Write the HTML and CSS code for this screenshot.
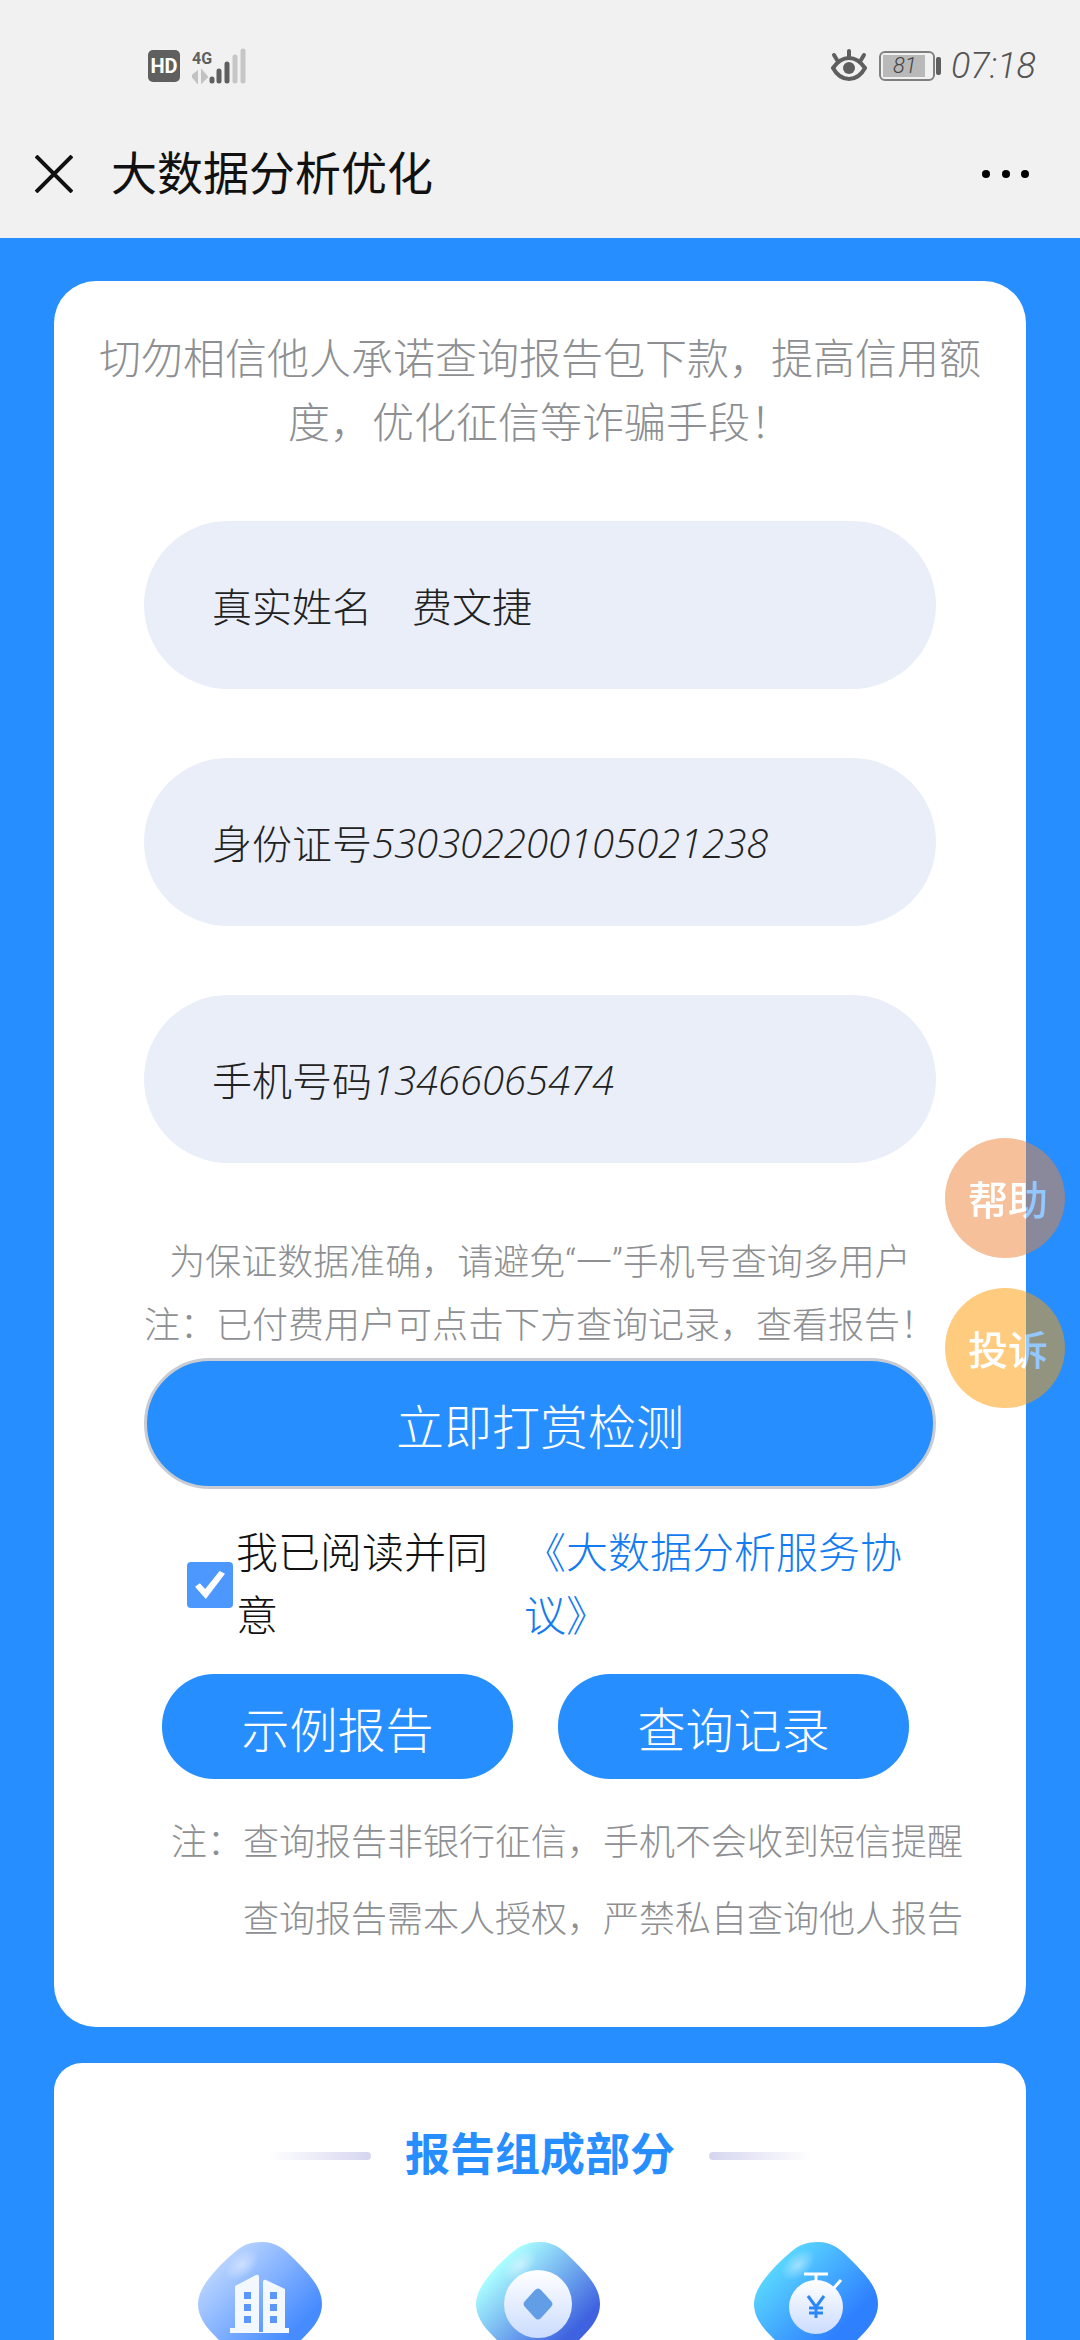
FILE: index.html
```html
<!DOCTYPE html>
<html lang="zh-CN">
<head>
<meta charset="utf-8">
<meta name="viewport" content="width=device-width, initial-scale=1">
<title>大数据分析优化</title>
<link rel="stylesheet" href="styles.css">
</head>
<body>
<header class="top">
  <div class="status">
    <div class="status-group">
      <span class="hd">HD</span>
      <svg class="signal" width="56" height="36" viewBox="0 0 56 36" aria-label="4G">
        <text x="0" y="16" class="signal-text">4G</text>
        <path d="M5 34V24L0 28ZM10 23V34L15 29Z" fill="#c2c2c2" stroke="#c2c2c2" stroke-width="2"/>
        <path d="M20 33V31M27 33V23M35 33V16" stroke="#5f5f5f" stroke-width="5" stroke-linecap="round"/>
        <path d="M43 33V9M51 33V3" stroke="#c6c6c6" stroke-width="5" stroke-linecap="round"/>
      </svg>
    </div>
    <div class="status-group">
      <svg width="36" height="34" viewBox="0 0 36 34" fill="none" stroke="#5f5f5f" stroke-linecap="round">
        <path d="M2 19Q9 9 18 9T34 19Q28 30 18 30T2 19Z" stroke-width="4"/>
        <path d="M18 2V8M3 6L6 11M33 6L30 11" stroke-width="4"/>
        <circle cx="18" cy="19" r="6" fill="#5f5f5f" stroke="none"/>
      </svg>
      <span class="battery"><span class="battery-level">81</span></span>
      <span class="clock">07:18</span>
    </div>
  </div>
  <nav class="titlebar">
    <button class="icon-button" type="button" aria-label="关闭">
      <svg width="38" height="38" viewBox="0 0 38 38"><path d="M1 1L37 37M37 1L1 37" stroke="#111" stroke-width="4"/></svg>
    </button>
    <h1 class="title">大数据分析优化</h1>
    <button class="icon-button" type="button" aria-label="更多">
      <svg width="48" height="8" viewBox="0 0 48 8"><circle cx="4" cy="4" r="4"/><circle cx="24" cy="4" r="4"/><circle cx="43" cy="4" r="4"/></svg>
    </button>
  </nav>
</header>

<main class="page">
  <section class="card">
    <p class="warning">切勿相信他人承诺查询报告包下款，提高信用额度，优化征信等诈骗手段！</p>
    <form class="form">
      <div class="field">
        <label for="name">真实姓名</label>
        <input id="name" type="text" value="　费文捷">
      </div>
      <div class="field">
        <label for="idno">身份证号</label>
        <input id="idno" class="digits" type="text" value="530302200105021238">
      </div>
      <div class="field">
        <label for="phone">手机号码</label>
        <input id="phone" class="digits" type="tel" value="13466065474">
      </div>
      <p class="hint">为保证数据准确，请避免“一”手机号查询多用户<br>注：已付费用户可点击下方查询记录，查看报告！</p>
      <button class="submit" type="button">立即打赏检测</button>
      <div class="agree">
        <input id="agree" class="check" type="checkbox" checked>
        <label for="agree">我已阅读并同意</label>
        <a href="#terms">《大数据分析服务协议》</a>
      </div>
      <div class="actions">
        <button type="button">示例报告</button>
        <button type="button">查询记录</button>
      </div>
    </form>
    <p class="notes">注：查询报告非银行征信，手机不会收到短信提醒<br>查询报告需本人授权，严禁私自查询他人报告</p>
  </section>

  <section class="card parts">
    <h2 class="parts-title">报告组成部分</h2>
    <div class="parts-row">
      <svg width="124" height="124" viewBox="0 0 124 124">
        <defs>
          <linearGradient id="g1" x1="0" y1="0" x2="1" y2="1"><stop offset=".2" stop-color="#b3d0ff"/><stop offset=".75" stop-color="#468bff"/></linearGradient>
          <linearGradient id="g2" x1="0" y1="0" x2="1" y2="1"><stop offset=".2" stop-color="#a8fbff"/><stop offset=".75" stop-color="#3f63e0"/></linearGradient>
          <linearGradient id="g3" x1="0" y1="0" x2="1" y2="1"><stop offset=".2" stop-color="#57d3ff"/><stop offset=".7" stop-color="#2f80ff"/></linearGradient>
          <linearGradient id="w" x1="0" y1="0" x2="0" y2="1"><stop offset="0" stop-color="#fff"/><stop offset="1" stop-color="#cbdcff"/></linearGradient>
          <radialGradient id="shine"><stop offset="0" stop-color="#fff" stop-opacity=".45"/><stop offset="1" stop-color="#fff" stop-opacity="0"/></radialGradient>
          <path id="gem" d="M64 0C78 0 86 7 94 15C104 25 110 31 115 38C121 46 124 54 124 62C124 74 117 84 107 94C94 107 80 124 62 124S30 107 17 94C7 84 0 74 0 62C0 54 4 46 9 39C17 28 27 18 38 9C45 3 53 0 64 0Z"/>
        </defs>
        <use href="#gem" fill="url(#g1)"/>
        <ellipse cx="44" cy="23" rx="20" ry="12" transform="rotate(-40 44 23)" fill="url(#shine)"/>
        <path d="M32 91V86H37V44L58 33Q61 32 61 35V90H65V40Q65 37 68 38L87 47V86H91V91Z" fill="#f3f8ff"/>
        <path d="M46 50h7v7h-7zM46 62h7v7h-7zM46 74h7v7h-7zM72 50h7v7h-7zM72 62h7v7h-7zM72 74h7v7h-7z" fill="#5b97fb"/>
      </svg>
      <svg width="124" height="124" viewBox="0 0 124 124">
        <use href="#gem" fill="url(#g2)"/>
        <ellipse cx="44" cy="23" rx="20" ry="12" transform="rotate(-40 44 23)" fill="url(#shine)"/>
        <circle cx="62" cy="62" r="34" fill="url(#w)"/>
        <path d="M59 48Q62 45 65 48L75 59Q78 62 75 65L65 76Q62 79 59 76L49 65Q46 62 49 59Z" fill="#629ee5"/>
      </svg>
      <svg width="124" height="124" viewBox="0 0 124 124">
        <use href="#gem" fill="url(#g3)"/>
        <ellipse cx="44" cy="23" rx="20" ry="12" transform="rotate(-40 44 23)" fill="url(#shine)"/>
        <path d="M50 32H74M62 32V42M79 47L87 38" stroke="#fff" stroke-width="3" fill="none"/>
        <circle cx="62" cy="65" r="27" fill="url(#w)"/>
        <path d="M54 54L62 65L70 54M62 65V76M55 66H69M55 71H69" stroke="#2b87f5" stroke-width="3" fill="none"/>
      </svg>
    </div>
  </section>
</main>

<aside class="float">
  <button class="help" type="button">帮助</button>
  <button class="complain" type="button">投诉</button>
</aside>
</body>
</html>
```

FILE: styles.css
```css
* { box-sizing: border-box; }
html { height: 100%; }
body {
  margin: 0;
  height: 100%;
  overflow: hidden;
  display: flex;
  flex-direction: column;
  background: #268eff;
  color: #222;
  font-family: Roboto, "Noto Sans CJK SC", sans-serif;
  font-weight: 300;
  font-size: 40px;
}
h1, h2, p { margin: 0; }
button, input { font: inherit; color: inherit; border: 0; padding: 0; background: none; }
svg { display: block; }

.top { background: #f1f1f1; height: 238px; flex: none; }
.status {
  height: 132px;
  padding: 0 44px 0 148px;
  display: flex;
  justify-content: space-between;
  align-items: center;
}
.status-group { display: flex; align-items: center; gap: 12px; }
.hd {
  width: 32px;
  height: 32px;
  border-radius: 5px;
  background: #5f5f5f;
  color: #fff;
  font-size: 20px;
  font-weight: 700;
  line-height: 32px;
  text-align: center;
}
.signal-text { font-size: 16px; font-weight: 700; fill: #5f5f5f; }
.battery {
  position: relative;
  width: 56px;
  height: 30px;
  margin-right: 4px;
  padding: 2px;
  border: 2px solid #808080;
  border-radius: 6px;
}
.battery::after {
  content: "";
  position: absolute;
  right: -8px;
  top: 4px;
  width: 5px;
  height: 18px;
  border-radius: 2px;
  background: #5f5f5f;
}
.battery-level {
  display: block;
  width: 42px;
  height: 22px;
  padding-left: 10px;
  background: #b9b9b9;
  color: #444;
  font-size: 22px;
  font-style: italic;
  line-height: 22px;
}
.clock { font-size: 36px; font-style: italic; color: #555; }
.titlebar {
  height: 84px;
  padding: 0 50px 0 35px;
  display: flex;
  align-items: center;
}
.title {
  flex: 1;
  margin-left: 38px;
  font-size: 46px;
  font-weight: 400;
  line-height: 64px;
  color: #111;
}

.page {
  flex: 1;
  min-height: 0;
  padding: 43px 5% 0;
  display: flex;
  flex-direction: column;
  gap: 36px;
}
.card {
  flex: none;
  border-radius: 42px;
  background: #fff;
}
.warning {
  padding: 47px 24px 0;
  font-size: 42px;
  line-height: 64px;
  text-align: center;
  color: #8d8f92;
}
.form { padding: 65px 90px 0; display: flex; flex-direction: column; }
.field {
  height: 168px;
  margin-bottom: 69px;
  padding: 0 160px 0 68px;
  display: flex;
  align-items: center;
  border-radius: 84px;
  background: #e9eef9;
}
.field label { flex: none; }
.field input { flex: 1; min-width: 0; height: 64px; }
.field .digits { font-family: "Open Sans", Roboto, sans-serif; font-style: italic; }
.hint {
  font-size: 36px;
  line-height: 63px;
  white-space: nowrap;
  text-align: center;
  color: #8d8f92;
}
.submit {
  height: 131px;
  border: 3px solid #c8ccd2;
  border-radius: 66px;
  background: #268eff;
  color: #fff;
  font-size: 48px;
}
.agree {
  margin: 33px 32px 0 43px;
  display: flex;
  align-items: center;
  font-size: 42px;
  line-height: 63px;
  color: #111;
}
.check {
  appearance: none;
  flex: none;
  width: 46px;
  height: 46px;
  margin: 0 3px 0 0;
  border-radius: 4px;
  background: #4d98fe;
  display: grid;
  place-items: center;
}
.check:checked::before {
  content: "";
  width: 30px;
  height: 28px;
  background: #fff;
  clip-path: polygon(0 56%, 16% 44%, 34% 64%, 82% 0, 100% 10%, 36% 100%);
}
.agree label { flex: 0 0 252px; margin-right: 36px; }
.agree a { flex: 1; color: #147cf0; text-decoration: none; }
.actions { margin: 26px 27px 0 18px; display: flex; gap: 45px; }
.actions button {
  flex: 1;
  height: 105px;
  border-radius: 52px;
  background: #268eff;
  color: #fff;
  font-size: 48px;
}
.notes {
  padding: 26px 63px 68px;
  font-size: 36px;
  line-height: 77px;
  text-align: right;
  white-space: nowrap;
  color: #8d8f92;
}

.parts { flex: 1; min-height: 0; overflow: hidden; border-radius: 28px 28px 0 0; }
.parts-title {
  padding-top: 61px;
  display: flex;
  justify-content: center;
  align-items: center;
  gap: 34px;
  font-size: 45px;
  font-weight: 700;
  line-height: 64px;
  color: #268eff;
}
.parts-title::before,
.parts-title::after {
  content: "";
  width: 103px;
  height: 8px;
  border-radius: 4px;
  background: linear-gradient(to left, #d5d5f0, #fff);
}
.parts-title::after { background: linear-gradient(to right, #d5d5f0, #fff); }
.parts-row {
  padding: 54px 148px 0 144px;
  display: flex;
  justify-content: space-between;
}

.float {
  position: fixed;
  right: 15px;
  top: 1138px;
  display: flex;
  flex-direction: column;
  gap: 30px;
}
.float button {
  width: 120px;
  height: 120px;
  padding-left: 6px;
  border-radius: 50%;
  color: #fff;
  font-size: 40px;
  font-weight: 500;
  opacity: .5;
}
.help { background: #ed8139; }
.complain { background: #f90; }
```
